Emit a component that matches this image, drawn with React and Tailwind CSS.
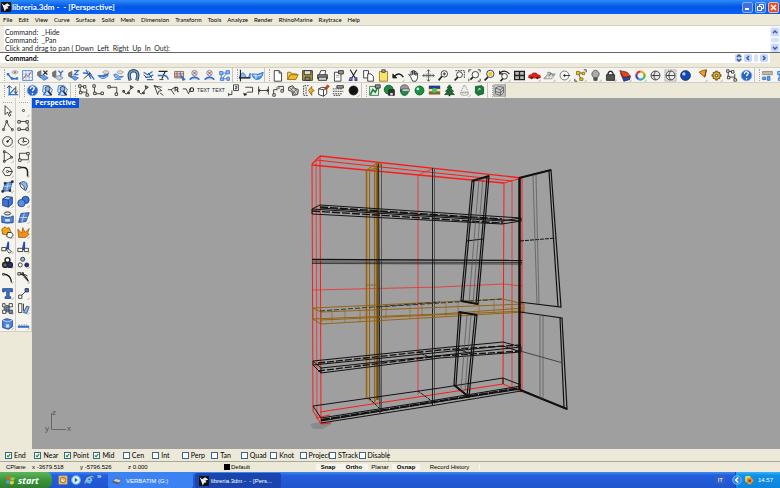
import { useState } from 'react';

const B = '#2f6fd0';
const D = '#222';

// Icon drawings, all on a 16x16 grid
const icons = {
    eyeLine: <><path d="M2 6l5 6 7 0" stroke={B} strokeWidth="1.6" /><path d="M7 4q4-4 8 0q-4 4-8 0z" fill="#ddd" stroke="#999" /><circle cx="11" cy="4" r="1.2" fill="#777" stroke="none" /><path d="M1 5h3v3H1zM6 10h3v3H6zM12 10h3v3h-3z" fill={B} stroke="none" /></>,
    gridMap: <><path d="M2 2h12v12H2z" fill="#fff" stroke={B} /><path d="M2 6h12M2 10h12M6 2v12M10 2v12" stroke="#79b5ec" /><path d="M3 12L6 7l3 2 4-6" stroke="#c33" /></>,
    cpX: <><path d="M2 4l4-2v9l-4-3z" fill="#777" stroke="#666" /><path d="M4 9l6 5 5-3-6-4z" fill="#6ba0ea" stroke={B} /><path d="M9 2l5 5M14 2L9 7" strokeWidth="1.5" /></>,
    cpY: <><path d="M2 4l4-2v9l-4-2z" fill="#777" stroke="#666" /><path d="M5 10l5 4 5-3-5-3z" fill="#bcd4f6" stroke="#888" /><path d="M9 2l3 3 3-3M12 5v4" stroke={B} strokeWidth="1.6" /></>,
    cpZ: <><path d="M2 5l4-2v8l-4-2z" fill="#777" stroke="#666" /><path d="M5 10l5 4 4-3-5-2z" fill="#6ba0ea" stroke={B} /><path d="M9 2h5L9 7h5" stroke={B} strokeWidth="1.5" /></>,
    cross: <><path d="M1 5q9-1 14 8M5 1l6 11" stroke={B} strokeWidth="1.6" /><path d="M2 12l8-7M8 3l4 4" /></>,
    srfEye: <><path d="M1 8q6 7 12 1l1-4-7 3z" fill={B} stroke={B} /><path d="M7 4q4-4 8 0q-4 4-8 0z" fill="#ddd" stroke="#999" /><path d="M4 10q5 2 8-1" stroke="#cfe0f8" /></>,
    srfPen: <><path d="M2 7q3 8 12 2-5 2-9-3z" fill="#8bb8ee" stroke={B} /><path d="M6 4q4-4 8 0q-4 4-8 0z" fill="#ddd" stroke="#999" /><path d="M3 13h8" stroke={B} /></>,
    magnet: <><path d="M4 14q-4-11 4-12 8 1 4 12" strokeWidth="4" stroke="#345" /><path d="M4 14q-4-11 4-12 8 1 4 12" strokeWidth="1.6" stroke="#6aa5ea" /></>,
    rays: <><path d="M2 4l5 3 6-4M4 10l5 0 5-3M6 13l8 0" stroke={B} strokeWidth="1.5" /><path d="M2 7l4 4M8 5l4 6" /></>,
    bars: <><path d="M2 3h11M10 3L6 12" strokeWidth="1.4" /><path d="M1 8h8q3 0 5 5" stroke={B} strokeWidth="1.7" /><path d="M3 13h5" /></>,
    cage: <><path d="M2 3h11v8H2zM2 6h11M2 9h11M5 3v8M9 3v8" stroke="#8a5a40" fill="#cfe0f8" /><path d="M10 8l5 5-3 1z" fill={B} stroke={B} /></>,
    pin: <><circle cx="8" cy="5" r="3.4" fill="#d9e6f6" stroke="#888" /><path d="M6 3l4 4M10 3L6 7" stroke="#a33" /><path d="M2 13q6-6 12 0" stroke={B} strokeWidth="2" fill="#bcd" /></>,
    net: <><path d="M2 3h4v4H2zM10 2h4v4h-4zM3 11h4v3H3zM11 10h3v4h-3z" fill="#8fc0f5" stroke={B} /><path d="M6 5h4M4 7v4M7 12h4M10 6l-4 5" stroke={B} /></>,
    graph: <><path d="M2 9q4-8 7-1t6-3v6H2z" fill="#8fb8ec" stroke={B} /><path d="M3 1v14M1 11h14" strokeWidth="1.4" /></>,
    hull: <><path d="M1 6q8 2 14-2-1 9-8 9-5-1-6-7z" fill="#4c93e8" stroke={B} /><path d="M3 8q5 2 10-1M6 7v5" stroke="#fff" /></>,
    newFile: <path d="M4 2h6l3 3v10H4zM10 2v3h3" fill="#fff" />,
    open: <><path d="M2 13V4h4l1 2h6v2" fill="#f7d768" stroke="#8a6508" /><path d="M2 13l3-6h10l-3 6z" fill="#f4b928" stroke="#8a6508" /></>,
    save: <><path d="M2 2h12v12H2z" fill="#b39b2c" /><path d="M4 2h8v5H4z" fill="#ddd" /><path d="M5 10h6v4H5z" fill="#888" /></>,
    print: <><path d="M4 7l2-5h6l-1 5" fill="#fff" /><path d="M2 7h12v5H2z" fill="#888" /><path d="M3 10h10v4H3z" fill="#ccc" /></>,
    note: <><path d="M3 4h8v11H3z" fill="#fff" /><path d="M8 2h6v4H8z" fill="#999" /><path d="M5 8h4M5 10h4" stroke="#999" /></>,
    cut: <><path d="M4 1l6 10M12 1L6 11" strokeWidth="1.4" /><path d="M4 11h2v3H3zM10 11h2v3h-2z" stroke="#3344a0" strokeWidth="1.6" /></>,
    copy: <><path d="M2 2h6v9H2z" fill="#fff" /><path d="M7 6h4l3 3v6H7z" fill="#fff" /></>,
    paste: <><path d="M3 3h10v12H3z" fill="#f8e36c" stroke="#8b7918" /><path d="M6 1h4v3H6z" fill="#bbb" /></>,
    undo: <><path d="M3 9q6-6 11 1" strokeWidth="1.8" /><path d="M1 6v5h5z" fill={D} /></>,
    hand: <path d="M4 9L2 7l1-1 2 2V3h2v4-5h2v5-4h2v5-3h2v6l-2 4H7z" fill="#fff" />,
    rotate: <><path d="M8 1v14M1 8h14M6 3l2-2 2 2M6 13l2 2 2-2M3 6L1 8l2 2M13 6l2 2-2 2" stroke="#444" /><ellipse cx="8" cy="8" rx="4" ry="2" stroke="#888" /></>,
    zoom: <><circle cx="9" cy="6" r="4" fill="#f7f7f7" /><path d="M6 9l-4 5" strokeWidth="2" /><path d="M7 6h4M9 4v4" /></>,
    zoomWin: <><path d="M3 2h11v10" strokeDasharray="2 1" /><circle cx="8" cy="7" r="3.6" fill="#f7f7f7" /><path d="M6 10l-4 4" strokeWidth="2" /></>,
    zoomAll: <><path d="M1 4V1h3M12 1h3v3M15 12v3h-3M1 12v3" /><circle cx="9" cy="7" r="4" fill="#f7f7f7" /><path d="M6 10l-3 3" strokeWidth="2" /></>,
    zoomSel: <><circle cx="9" cy="6" r="4.5" fill="#eee" /><circle cx="9" cy="6" r="2.6" fill="#f3c62c" stroke="none" /><path d="M6 10l-4 4" strokeWidth="2" /></>,
    zoomBack: <><circle cx="8" cy="9" r="3.5" fill="#f7f7f7" /><path d="M6 12l-3 3" strokeWidth="2" /><path d="M2 5q6-5 12 1M2 2v4h4" strokeWidth="1.4" /></>,
    four: <><path d="M2 3h12v10H2z" fill="#bbb" strokeWidth="1.6" /><path d="M2 8h12M8 3v10" strokeWidth="1.6" /></>,
    car: <><path d="M1 8l3-1 2-2h4l2 2 3 1v3H1z" fill="#e02020" stroke="#c01010" /><circle cx="4.5" cy="11" r="1" fill="#222" /><circle cx="11.5" cy="11" r="1" fill="#222" /></>,
    plane: <><path d="M1 12l5-6h9l-4 6z" fill="#bbb" stroke="#888" /><path d="M4 10h9M7 7l-2 5M11 6l-2 6" stroke="#eee" /><path d="M5 5q4-3 7 3" stroke="#2a8a4a" /><path d="M7 9l3-4" stroke="#c33" /></>,
    target: <><circle cx="8" cy="8" r="5.5" stroke="#666" /><circle cx="8" cy="8" r="1" fill={D} /><path d="M8 8h7" /></>,
    points: <><path d="M12 1h3v3M1 12v3h3M7 5h3M8 11L6 7" /><path d="M3 3h4v4H3zM10 4h3v3h-3zM7 11h4v3H7z" fill="#f2c61c" stroke="#86680a" /></>,
    bulb: <><path d="M6 11Q2 7 4 4q4-5 8 0 2 3-2 7z" fill="#aaa" stroke="#555" /><path d="M6 11h4v3H6z" fill="#555" stroke="#444" /></>,
    lock: <><path d="M5 8V5q3-5 6 0v3" strokeWidth="1.6" /><path d="M3 7h10v7H3z" fill="#555" /></>,
    layers: <><path d="M2 5l3 5 9-1-1 4-7 2z" fill="#284b9c" stroke="#152c66" /><path d="M1 2l9 2 4 5-9 1z" fill="#e8431c" stroke="#801c08" /></>,
    wheel: <><path d="M8 3a5 5 0 0 1 4.300 2.500" stroke="#f5a11a" strokeWidth="2.600" /><path d="M12.300 5.500a5 5 0 0 1-1 6.200" stroke="#67b72c" strokeWidth="2.600" /><path d="M11.300 11.700a5 5 0 0 1-5.800.6" stroke="#29a9d8" strokeWidth="2.600" /><path d="M5.500 12.300a5 5 0 0 1-2-6.400" stroke="#5c37c6" strokeWidth="2.600" /><path d="M3.500 5.900A5 5 0 0 1 8 3" stroke="#e22d2d" strokeWidth="2.600" /></>,
    globe: <><circle cx="8" cy="8" r="5.5" fill="#e5e5e5" /><path d="M3 8h10" /><path d="M8 3q-4 5 0 10" /></>,
    globeSel: <><path d="M1 1h14v14H1z" fill="#ddd" stroke="#888" strokeDasharray="1 1" /><circle cx="8" cy="8" r="5.5" fill="#eee" /><path d="M3 8h10M8 3q-4 5 0 10" /></>,
    blueBall: <><circle cx="8" cy="8" r="6" fill="#1547b4" stroke="#0b2257" /><circle cx="6" cy="6" r="2" fill="#b9d4ff" stroke="none" /></>,
    cone: <><path d="M5 4q4-3 9-3l-2 9z" fill="#f29b2c" stroke="#90500a" /><path d="M14 1l-2 9" stroke="#333" /></>,
    gear: <><path d="M8 2v12M2 8h12M4 4l8 8M12 4l-8 8" stroke="#6b4f0c" strokeWidth="3" /><circle cx="8" cy="8" r="4.5" fill="#e2b335" stroke="#7c5c10" /><circle cx="8" cy="8" r="1.5" fill="#fff" /></>,
    dimBox: <><path d="M4 3v7h8M4 3h4M12 6v8" /><path d="M2 1h3v3H2zM8 2h3v3H8zM3 9h3v3H3zM11 12h3v3h-3z" fill="#fff" /></>,
    help: <><circle cx="8" cy="8" r="6.5" fill="#2764c6" stroke="#7fa6e8" /><path d="M5.500 6q0-3 3-2.600 3 1 1 3.200-1.500 1-1.500 2.400" stroke="#fff" strokeWidth="1.600" /><circle cx="8" cy="12" r="1" fill="#fff" stroke="none" /></>,
    panel: <><path d="M2 3h12v4H2z" fill="#c4b89a" stroke="#888" /><path d="M2 10h4v3H2zM8 9h3v5H8z" fill="#5c9fe8" stroke={B} /></>,
    axes: <><path d="M4 2v11h11M3 14l8-9" stroke={B} strokeWidth="1.600" /><path d="M1 5l3-3 3 3M12 3v8M10 9l2 3 2-3" /></>,
    findMan: <><path d="M3 2h7l4 5-3 7H6L2 9z" fill="#d7e6fa" stroke={B} /><circle cx="8" cy="6" r="3" fill="#8fb8ec" stroke="#234" /><path d="M9 9l4 5" strokeWidth="2" /><path d="M3 14l3-5" stroke={B} strokeWidth="2" /></>,
    dimL: <><path d="M3 3v9h9" /><path d="M1 1h3v3H1zM2 10h3v3H2zM11 10h3v3h-3z" fill="#fff" /></>,
    dimR: <><path d="M2 4h10v8" /><path d="M1 2h3v3H1zM10 11h3v3h-3z" fill="#fff" /></>,
    curvePt: <><path d="M2 9q3 6 6 1l4-6" /><path d="M1 8h2v2H1zM7 10h2v2H7zM10 2l4 2-3 2z" fill="#888" /></>,
    arrowPts: <><path d="M3 2l4 11 1-4 4-1z" fill="#fff" /><path d="M2 2l10 2M10 11l4 3" /></>,
    leaderA: <><path d="M1 7h4l4 6M5 7l5-3" /><path d="M10 9V4h2q3 2 0 3l2 3" strokeWidth="1.300" /></>,
    leaderB: <><path d="M1 6h4l3 6 3-7" /><circle cx="12" cy="7" r="2.300" strokeWidth="1.300" /></>,
    dimTwo: <><path d="M2 13h4V8M2 11v4" /><path d="M8 1h6v7H8z" fill="#fff" /><path d="M10 3h2v2h-2v1h2" /></>,
    leader: <><path d="M3 13l4-3h6V4H4" /><path d="M2 11l1 3 3-1" fill={D} /></>,
    dimH: <path d="M2 3v10M14 3v10M2 8h12M4 6L2 8l2 2M12 6l2 2-2 2" />,
    dimV: <><path d="M2 13V7h5M7 3h7v5M5 5l5 0" /><path d="M1 12h3v3H1zM11 7h3v3h-3z" fill="#fff" /></>,
    hatch: <><path d="M2 4l5-2 2 3 5 2-1 6-6 1-1-5-4-1z" fill="#ddd" /><path d="M3 4l9 9M6 3l8 8M6 9l4 5M12 6l-5 6M8 4L4 8" stroke="#555" /></>,
    explodeB: <><path d="M8 2H2v12h6M5 4v8" strokeDasharray="2 1" /><path d="M8 8l4-5v3l3 2-3 2v4z" fill="#f2b028" stroke="#8a5c08" /></>,
    boxPen: <><path d="M2 6l4-2 6 1v7l-4 3-6-2zM2 6l6 1 4-2M8 7v8" fill="#fff" /><path d="M10 5l3-4 2 2-4 4z" fill="#e8431c" stroke="#a02a0a" /></>,
    list: <><path d="M1 6h11M1 9h13M1 12h11M2 14h8" strokeDasharray="2 1" /><path d="M6 2h8v3H6z" fill="#aaa" /></>,
    ball: <circle cx="8" cy="8" r="5.5" fill="#111" />,
    renderBox: <><path d="M2 3h11v11H2z" fill="#e6f3ea" stroke="#2c6b40" /><path d="M3 13l3-6 3 3 3-6" stroke="#168238" strokeWidth="2" /><path d="M9 1h6v4H9z" fill="#999" /></>,
    renderSave: <><circle cx="7" cy="7" r="5.5" fill="#159044" stroke="#0c5427" /><path d="M7 7h7v7H7z" fill="#333" /><path d="M9 11h3v3H9z" fill="#ddd" stroke="none" /></>,
    renderWin: <><circle cx="8" cy="6" r="5" fill="#999" stroke="#555" /><path d="M3 7h10q0 7-5 7t-5-7z" fill="#159044" stroke="#0c5427" /><path d="M5 6h9v3H5z" fill="#ddd" stroke="#555" /></>,
    greenBall: <><circle cx="8" cy="8" r="5.5" fill="#149443" stroke="#0c5427" /><circle cx="6" cy="6" r="1.600" fill="#d5ffe2" stroke="none" /></>,
    sky: <><path d="M1 2h14v5H1z" fill="#233a91" stroke="none" /><path d="M1 6h14v3H1z" fill="#f5e37a" stroke="none" /><path d="M1 9h14v4H1z" fill="#8a5f30" stroke="none" /><circle cx="8" cy="8" r="3" fill="#4cc25e" stroke="none" /></>,
    tree: <><path d="M8 1l3 4H9l4 4h-3l4 4H2l4-4H3l4-4H5z" fill="#1c6b33" stroke="#134a23" /><path d="M8 13v2" strokeWidth="2" /></>,
    spot: <><path d="M7 2h2l4 9H3z" fill="#eee" stroke="#888" strokeDasharray="2 1" /><ellipse cx="8" cy="12" rx="5" ry="2" stroke="#999" /></>,
    greenDoc: <><path d="M3 3l8-1 2 2v8l-7 2-3-3z" fill="#1c7a3b" stroke="#0c5427" /><path d="M6 8l3-3M7 5l2 2" stroke="#fff" /></>,
    meshCube: <><path d="M1 1h14v14H1z" fill="#ccc" stroke="#888" /><path d="M3 5l4-2 6 1v7l-4 3-6-2zM3 5l6 2 4-3M9 7v7M3 9l6 2 4-4" stroke="#555" /></>,
    arrow: <path d="M5 2v11l3-3 2 5 2-1-2-4h3z" fill="#fff" />,
    dot: <circle cx="8" cy="8" r="1.300" fill="#fff" />,
    poly: <><path d="M3 13L7 3l3 6 4 4" /><path d="M2 12h2v2H2zM6 2h2v2H6zM13 12h2v2h-2z" fill="#fff" /></>,
    ctrl: <><path d="M3 3h10M3 13h9q4-6 0-8" /><path d="M1 2h3v3H1zM11 2h3v3h-3zM1 11h3v3H1zM11 11h3v3h-3z" fill="#fff" /></>,
    circle: <><circle cx="8" cy="8" r="6" /><circle cx="8" cy="8" r="1" fill={D} /><path d="M8 8l4-4" /></>,
    ellipse: <><ellipse cx="8" cy="8" rx="6.500" ry="4.500" /><path d="M8 4v4h4" /><circle cx="8" cy="8" r="1" fill="#fff" /></>,
    arc: <><path d="M4 2v12l9-5Q11 4 4 2z" /><path d="M3 1h2v2H3zM3 13h2v2H3zM12 8h2v2h-2z" fill="#fff" /></>,
    rect: <><path d="M3 4h11v8H3z" /><path d="M2 11h3v3H2zM12 3h3v3h-3z" fill="#fff" /></>,
    hexagon: <><path d="M5 3h6l3 5-3 5H5L2 8z" /><circle cx="8" cy="8" r="1.300" fill="#fff" /><path d="M9 8h5" /></>,
    fillet: <><path d="M3 3h5q5 0 5 6v5" strokeWidth="1.800" /><path d="M1 2h3v2H1z" fill="#fff" /></>,
    surf: <><path d="M5 4l9-2-3 11-9 1z" fill="#5b8fe4" stroke="#26457e" /><path d="M9 3L7 13M4 8l9-1" stroke="#cfe0f8" /><path d="M4 3h2v2H4zM13 1h2v2h-2zM10 12h2v2h-2zM1 13h2v2H1z" fill="#345" /></>,
    revolve: <><path d="M3 4q5-4 9 0 2 4-1 9l-2-1q1-6-6-8z" fill="#8fb8ec" stroke="#26457e" /><path d="M3 4q1 6 6 8" /></>,
    cube: <><path d="M2 5l5-3 7 1v8l-5 4-7-2z" fill="#3b74d4" stroke="#1c3d7c" /><path d="M2 5l7 1 5-3-7-1z" fill="#9cc0f6" stroke="#1c3d7c" /><path d="M9 6v9" stroke="#1c3d7c" /></>,
    balls: <><circle cx="10.5" cy="6" r="4.5" fill="#3b74d4" stroke="#1c3d7c" /><circle cx="5.5" cy="10" r="4.5" fill="#5b8fe4" stroke="#1c3d7c" /></>,
    tube: <><ellipse cx="8" cy="3" rx="4" ry="2" fill="#ddd" /><path d="M1 6q7 4 14 0v8q-7 2-14 0z" fill="#4f84d8" stroke="#1c3d7c" /><path d="M5 10h6v3H5z" fill="#cfe0f8" stroke="none" /></>,
    mesh: <><path d="M5 3l10-1-4 11-9 1z" fill="#4f84d8" stroke="#26457e" /><path d="M9 3L6 14M4 8h9" stroke="#cfe0f8" /></>,
    join: <><path d="M1 4l4-3 2 2 3-1 2 5-4 4-6-1z" fill="#f2a51c" stroke="#8a5c08" /><path d="M8 8h5l2 3-3 4-5-2z" fill="#fff" /></>,
    explode: <path d="M2 14L1 4l5 5 1-7 3 6 5-5-2 6 2 1-4 4z" fill="#f2921c" stroke="#a35a08" />,
    trim: <><path d="M9 1v9H7z" fill="#2450b0" stroke="#2450b0" strokeWidth="2" /><path d="M1 8h5v4H1zM8 9l5 4-3 2-3-4z" fill="#fff" /></>,
    split: <><path d="M9 1v9H7z" fill="#2450b0" stroke="#2450b0" strokeWidth="2" /><path d="M1 9h6v4H1zM9 9h5v4H9z" fill="#fff" /></>,
    group: <><circle cx="8" cy="5" r="3" fill="#fff" strokeWidth="1.800" /><circle cx="5" cy="11" r="3" fill="#666" strokeWidth="1.800" /><circle cx="11" cy="11" r="3" fill="#1c2fa0" strokeWidth="1.800" /></>,
    ungroup: <><circle cx="7" cy="4" r="2.500" fill="#8fb8ec" /><circle cx="4" cy="11" r="2.500" fill="#fff" /><circle cx="12" cy="11" r="2.500" fill="#1c2fa0" /></>,
    arcPts: <><path d="M3 4q9 0 10 10" strokeWidth="1.600" /><path d="M2 3h2v2H2z" fill="#fff" /></>,
    arcEdit: <><path d="M2 4q8-1 12 9" strokeWidth="1.600" /><path d="M4 2l9 4M6 2h2v3M8 7l5 5" /><path d="M1 2h3v3H1z" fill="#fff" /></>,
    type: <path d="M2 2h12v4h-2V5H10v7h2v2H5v-2h2V5H4v1H2z" fill="#3b74d4" stroke="#1c3d7c" />,
    linkSq: <><path d="M5 11l6-6" /><path d="M2 10h4v4H2z" fill="#fff" /><path d="M10 2h4v4h-4z" fill="#3b74d4" /></>,
    blocks: <><path d="M6 4l4 1M6 12h4M4 6v4" /><path d="M2 2h3v4H2zM10 2h4v4h-4zM2 10h4v4H2z" fill="#fff" /><path d="M6 6h4v4H6zM10 10h4v4h-4z" fill="#6b9be8" /></>,
    scale: <><path d="M2 2h4v11H2z" fill="#fff" /><path d="M8 13l4-8 3 1-3 8z" fill="#8fb8ec" stroke="#26457e" /><path d="M8 2v9" /></>,
    box: <><path d="M2 4l5-2 7 2v8l-5 3-7-2z" fill="#4f84d8" stroke="#1c3d7c" /><path d="M2 4l6 2 6-2" stroke="#cfe0f8" /><path d="M6 9h4v4H6z" fill="#cfe0f8" stroke="none" /></>,
    ruler: <><path d="M1 12h14" stroke={B} strokeWidth="2.600" /><path d="M3 9v2M6 9v2M9 9v2M12 9v2" stroke="#888" /></>,
};

// Tools that open a flyout get a small mark in their corner
const flyouts = ['undo', 'zoomBack', 'car', 'plane', 'target', 'points', 'bulb', 'lock', 'layers', 'wheel', 'cone', 'gear', 'dimBox', 'ball', 'spot'];

const topA = ['eyeLine', 'gridMap', 'cpX', 'cpY', 'cpZ', 'cross', 'srfEye', 'srfPen', 'magnet', 'rays', 'bars', 'cage', 'pin', 'pin', 'net'];
const topB = ['graph', 'hull'];
const topC = ['newFile', 'open', 'save', 'print', 'note', 'cut', 'copy', 'paste', 'undo', 'hand', 'rotate', 'zoom', 'zoomWin', 'zoomAll', 'zoomSel', 'zoomBack', 'four', 'car', 'plane', 'target', 'points', 'bulb', 'lock', 'layers', 'wheel', 'globe', 'globeSel', 'blueBall', 'cone', 'gear', 'dimBox', 'help'];
const helpBar = ['help', 'findMan', 'findMan'];
const dimBar = ['dimBox', 'dimL', 'dimR', 'curvePt', 'curvePt', 'arrowPts', 'leaderA', 'leaderB', 'TEXT', 'TEXT', 'dimTwo', 'leader', 'dimH', 'dimV', 'hatch', 'explodeB', 'boxPen', 'list', 'ball'];
const renderBar = ['renderBox', 'renderSave', 'renderWin', 'greenBall', 'sky', 'tree', 'spot', 'greenDoc'];
const sideA = ['arrow', 'poly', 'circle', 'arc', 'hexagon', 'surf', 'cube', 'tube', 'join', 'trim', 'group', 'arcPts', 'type', 'blocks', 'box'];
const sideB = ['dot', 'ctrl', 'ellipse', 'rect', 'fillet', 'revolve', 'balls', 'mesh', 'explode', 'split', 'ungroup', 'arcEdit', 'linkSq', 'scale', 'ruler'];

const menus = ['File', 'Edit', 'View', 'Curve', 'Surface', 'Solid', 'Mesh', 'Dimension', 'Transform', 'Tools', 'Analyze', 'Render', 'RhinoMarine', 'Raytrace', 'Help'];

const snaps = ['End', 'Near', 'Point', 'Mid', 'Cen', 'Int', 'Perp', 'Tan', 'Quad', 'Knot', 'Project', 'STrack', 'Disable'];

function ToolButton({ name, flyout }) {
    return (
        <button aria-label={name} className="flex h-full min-w-0 flex-1 items-center justify-center">
            {name === 'TEXT' ? (
                <span className="text-[5px] leading-none text-[#222]">TEXT</span>
            ) : (
                <svg viewBox="0 0 16 16" className="size-[13px] shrink-0" fill="none" stroke="#222">
                    {icons[name]}
                    {(flyout || flyouts.includes(name)) && <path d="M13 16l3-3" stroke="#999" />}
                </svg>
            )}
        </button>
    );
}

function Toolbar({ names, className }) {
    return (
        <div className={'flex h-full shrink-0 items-center border-r border-[#c9c6b8] bg-[#f5f4ef] pl-1 ' + className}>
            <span className="h-3 border-l border-dotted border-[#aaa79a]"></span>
            {names.map((name, i) => <ToolButton key={i} name={name} />)}
        </div>
    );
}

function SideBar({ names }) {
    return (
        <div className="flex h-[234px] w-4 flex-col items-stretch border-r border-b border-[#d3d0c3] bg-[#f5f4ef] pt-1">
            <span className="mx-[3px] border-t border-dotted border-[#aaa79a]"></span>
            {names.map((name) => (
                <div key={name} className="flex min-h-0 flex-1"><ToolButton name={name} flyout={name !== 'arrow'} /></div>
            ))}
        </div>
    );
}

function RhinoMark() {
    return (
        <svg viewBox="0 0 16 16" className="size-2.5 shrink-0">
            <path d="M0 0h16v16H0z" fill="#111" />
            <path d="M1 2l4 3 5-3 5 4-5 1 2 3-4 1-2 4-2-6z" fill="#eee" />
        </svg>
    );
}

function TitleBar() {
    return (
        <header className="flex h-3.5 shrink-0 items-center bg-linear-to-b from-[#2f8bf8] via-[#0054e3] to-[#0761f8] px-px text-white">
            <RhinoMark />
            <h1 className="ml-px flex-1 font-['Lato',sans-serif] text-[8px] leading-none font-bold whitespace-pre">libreria.3dm -  - [Perspective]</h1>
            <div className="flex gap-0.5">
                <button aria-label="Minimize" className="flex h-[11px] w-[11px] items-end rounded-xs border border-[#8fb0f5] bg-[#3b6fe8] p-0.5">
                    <span className="h-0.5 w-1 bg-white"></span>
                </button>
                <button aria-label="Restore" className="h-[11px] w-[11px] rounded-xs border border-[#8fb0f5] bg-[#3b6fe8]">
                    <svg viewBox="0 0 9 9" fill="none" stroke="#fff"><path d="M3.500 3V1.500h4v4H6M1.500 3.500h4v4h-4z" /></svg>
                </button>
                <button aria-label="Close" className="h-[11px] w-[11px] rounded-xs border border-[#f0b8a4] bg-[#e2532c]">
                    <svg viewBox="0 0 9 9" fill="none" stroke="#fff" strokeWidth="1.500"><path d="M2 2l5 5M7 2L2 7" /></svg>
                </button>
            </div>
        </header>
    );
}

function Chevron({ label, d, className }) {
    return (
        <button aria-label={label} className={'h-2 rounded-xs bg-[#c6d5fb] ' + className}>
            <svg viewBox="0 0 8 8" className="mx-auto size-2" fill="none" stroke="#3d5a94" strokeWidth="1.500"><path d={d} /></svg>
        </button>
    );
}

function CommandArea() {
    const [command, setCommand] = useState('');
    return (
        <section className="flex shrink-0 flex-col pb-1 font-['Lato',sans-serif]">
            <div className="flex bg-white">
                <div className="flex flex-1 flex-col border-l-4 border-[#f0eee4] pt-0.5 pl-px text-[7px] leading-2 whitespace-pre text-[#222]">
                    <p>Command:  _Hide</p>
                    <p>Command:  _Pan</p>
                    <p>Click and drag to pan ( Down  Left  Right  Up  In  Out):</p>
                </div>
                <div className="flex w-2.5 flex-col justify-between bg-[#f3f5fd] px-px pt-0.5">
                    <Chevron label="Scroll up" d="M2 5l2-2 2 2" className="w-2" />
                    <span className="h-1 w-2 rounded-xs bg-[#d5e0fc]"></span>
                    <Chevron label="Scroll down" d="M2 3l2 2 2-2" className="w-2" />
                </div>
            </div>
            <div className="flex h-[11px] items-center border-t border-[#666] bg-white pl-[5px]">
                <label htmlFor="command" className="text-[7px] leading-none font-bold">Command:</label>
                <input id="command" value={command} onChange={(e) => setCommand(e.target.value)} className="ml-1 h-2 min-w-0 flex-1 text-[7px] outline-none" />
                <div className="flex items-center gap-0.5">
                    <Chevron label="History" d="M2 3l2-2 2 2M2 5l2 2 2-2" className="w-[7px]" />
                    <Chevron label="Scroll left" d="M5 2L3 4l2 2" className="w-2" />
                    <span className="h-2 w-1 rounded-xs bg-[#d5e0fc]"></span>
                    <Chevron label="Scroll right" d="M3 2l2 2-2 2" className="w-2" />
                    <span className="h-2.5 w-2.5 bg-[#ece9d8]"></span>
                </div>
            </div>
        </section>
    );
}

function Model() {
    return (
        <svg viewBox="32 98 748 351" className="h-full w-full" fill="none" strokeWidth="1">
            <path d="M310 424l10-2 12 2-10 5-9 0z" fill="#8b8b8b" />
            {/* back and side frame */}
            <g stroke="#ff1a1a">
                <path d="M320 156L522 178M312 165L504 183M312 164L320 156" strokeWidth="1.300" />
                <path d="M522 178L504 183M316 160L512 181M312 164L313 411L321 424M320 156L321 424L331 423" />
                <path d="M504 183L503 384L522 392M522 178L522 392M320 412L503 384M316 418L330 415" />
                <path d="M316 160L317 417M512 181L512 388M418 175V395M418 175L432 169M312 290L440 287L503 284L522 286" strokeWidth="0.700" />
            </g>
            {/* vertical dividers */}
            <path d="M378.500 163L380 414M432.500 168V405" stroke="#222" />
            <path d="M381.500 164V412M434.500 168V404" stroke="#555" />
            <g stroke="#96650f">
                <path d="M366.500 170L377 163L381 164L379 168L366.500 170V398L374 403L377 398V163M369.500 169V400M374.500 166V403M367 285h10" />
                <path d="M366.500 170V398M376.500 164V400" strokeWidth="1.600" />
                <path d="M313 308L440 302L503 299L524 304V312L440 317L321 324L313 319zM313 308L321 312L524 304M321 312V324M313 319L440 314L524 308M321 320L524 311" />
                <path d="M332 309V322M345 309V322M360 308V321M386 306V319M410 306V318M422 304V317M446 303V316M458 303V315M479 302V314M494 301V313M512 300V312" strokeWidth="0.600" />
            </g>
            <path d="M378 165V400" stroke="#3a2a0a" />
            <path d="M320 311L440 302M378 307L503 299" stroke="#333" strokeDasharray="5 2" />
            {/* shelves */}
            <g stroke="#111">
                <path d="M312 209L320 205L521 218V221L502 224L312 214zM312 209L502 221L521 218M320 208L521 221" />
                <path d="M312 211L502 223M320 207L502 219M502 221V224" strokeWidth="1.400" strokeDasharray="8 2" />
                <path d="M312 259.500L522 260.500" strokeWidth="1.300" />
                <path d="M312 262L522 262.500M312 263.500L522 264" strokeWidth="0.700" />
                <path d="M313 361L440 348L503 342L521 347V352L440 358L321 373L313 365zM313 361L321 368L521 347M321 368V373M313 365L503 346L521 352" />
                <path d="M318 363L440 350L521 345M318 371L440 356L521 351" strokeWidth="1.300" strokeDasharray="7 2" />
                <path d="M313 406L440 388L503 378L521 385M503 378V384M313 406L321 418" />
                <path d="M418 391L433 402M369 398L380 409M418 352L433 359" strokeDasharray="3 1" />
                <path d="M321 418L430 401L521 386M321 421L430 403L521 389M321 423L430 406L521 391" />
                <path d="M321 420L440 401L520 388" strokeWidth="2" strokeDasharray="9 1" />
            </g>
            {/* doors */}
            <g stroke="#111">
                <path d="M472 181L489 176L478 304L461 301zM474 181L463 301M487 177L476 304" strokeWidth="1.200" />
                <path d="M472 181L489 176M461 301L478 304" strokeWidth="2" />
                <path d="M466 241L483 239M456 348L473 355" />
                <path d="M459 312L477 315L469 397L454 385zM461 312L456 385M475 315L467 396" strokeWidth="1.200" />
                <path d="M459 312L477 315M454 385L469 397" strokeWidth="2" />
                <path d="M519 178L551 170L561 307L519 302M549 171L558 306" strokeWidth="1.200" />
                <path d="M519 178L551 170" strokeWidth="2" />
                <path d="M520 312L562 318L567 409L519 389M560 318L564 407" strokeWidth="1.200" />
                <path d="M520 390L567 409" strokeWidth="2" />
                <path d="M520 241L556 238" strokeDasharray="4 1" />
                <path d="M520 351L563 363" stroke="#444" />
                <path d="M519.500 178V390" strokeWidth="2.500" />
            </g>
            <path d="M479 179L469 302M483 178L473 303M533 176L537 304M536 175L539 304M540 316V398M543 316V399M467 315L461 389M471 315L465 391" stroke="#555" strokeWidth="0.700" />
            {/* world axes */}
            <path d="M51.500 413V429.500H66" stroke="#666" />
            <g fill="#555" fontSize="8" fontFamily="Liberation Sans, sans-serif">
                <text x="52" y="415">z</text>
                <text x="45" y="431">y</text>
                <text x="67" y="431">x</text>
            </g>
        </svg>
    );
}

function OsnapBar() {
    const [active, setActive] = useState(['End', 'Near', 'Point', 'Mid']);

    function toggle(name) {
        setActive((prev) => prev.includes(name) ? prev.filter((n) => n !== name) : [...prev, name]);
    }

    return (
        <div className="flex h-[13px] shrink-0 border-b border-[#aaa89c]">
            <div className="grid w-[389px] grid-cols-13 items-center border-r border-[#c5c2b2] pl-[5px]">
                {snaps.map((name) => (
                    <label key={name} className="flex items-center gap-0.5 font-['Lato',sans-serif] text-[7px] leading-none">
                        <input
                            type="checkbox"
                            checked={active.includes(name)}
                            onChange={() => toggle(name)}
                            className="peer sr-only"
                        />
                        <span className="size-[7px] shrink-0 border border-[#3c6490] bg-white text-white peer-checked:text-[#1fa01f]">
                            <svg viewBox="0 0 6 6" fill="none" stroke="currentColor" strokeWidth="1.500"><path d="M1 3l1.500 1.500L5 1" /></svg>
                        </span>
                        {name}
                    </label>
                ))}
            </div>
        </div>
    );
}

function StatusBar() {
    return (
        <div className="flex h-[10px] shrink-0 items-center text-[6px] leading-none">
            <span className="w-8 pl-1.5">CPlane</span>
            <span className="w-12">x -3679.518</span>
            <span className="w-12">y -5796.526</span>
            <span className="w-24">z 0.000</span>
            <button className="flex w-[92px] items-center"><span className="mr-px size-1.5 bg-black"></span>Default</button>
            <button className="w-6 bg-[#f5f4ef] font-bold">Snap</button>
            <button className="w-7 bg-[#f5f4ef] font-bold">Ortho</button>
            <button className="w-6">Planar</button>
            <button className="w-7 bg-[#f5f4ef] font-bold">Osnap</button>
            <button className="w-[60px] border-r border-[#f8f7f0]">Record History</button>
        </div>
    );
}

function TaskBar() {
    return (
        <footer className="flex h-4 shrink-0 items-stretch bg-linear-to-b from-[#3f8cf3] via-[#245edb] via-20% to-[#1f55cf] text-[7px] leading-none text-white">
            <button className="flex w-[52px] items-center gap-0.5 rounded-r-md bg-linear-to-b from-[#5eb55c] via-[#3a953a] to-[#2f7d2f] pl-1.5">
                <svg viewBox="0 0 16 16" className="size-2.5">
                    <path d="M2 3q3-2 5 0L6 8Q4 6 1 8z" fill="#f0562a" />
                    <path d="M8 3q3 2 6 0l-1 5q-3 2-6 0z" fill="#8fd146" />
                    <path d="M1 9q3-2 5 0l-1 5q-2-2-5 0z" fill="#4f9cf5" />
                    <path d="M7 9q3 2 6 0l-1 5q-3 2-6 0z" fill="#f9cd2e" />
                </svg>
                <span className="font-['Open_Sans',sans-serif] text-[9px] leading-none font-bold italic">start</span>
            </button>
            <nav className="flex w-14 items-center gap-[3px] pl-1.5">
                <button aria-label="Outlook">
                    <svg viewBox="0 0 16 16" className="size-2.5"><path d="M1 1h14v14H1z" fill="#e5b86a" /><circle cx="8" cy="8" r="4" fill="#fff" stroke="#c07a1c" strokeWidth="2" /><path d="M8 5v3h2" fill="none" stroke="#a55" /></svg>
                </button>
                <button aria-label="Media Player">
                    <svg viewBox="0 0 16 16" className="size-2.5"><circle cx="8" cy="8" r="7" fill="#e9f3ff" stroke="#58a6f0" strokeWidth="2" /><path d="M6 4l5 4-5 4z" fill="#1c66d0" /></svg>
                </button>
                <button aria-label="Internet Explorer">
                    <svg viewBox="0 0 16 16" className="size-2.5" fill="none"><path d="M4 9h8q0-5-4-5-4 1-4 5 1 4 7 3" stroke="#6cc0fa" strokeWidth="2.500" /><path d="M2 14Q0 10 8 4q6-4 7 0" stroke="#f5c542" strokeWidth="1.400" /></svg>
                </button>
                <span className="self-start pt-px text-[8px]">»</span>
            </nav>
            <button className="mt-px mr-0.5 flex w-[85px] items-center gap-1 rounded-xs bg-[#3d82f2] pl-1 text-[6px]">
                <svg viewBox="0 0 16 16" className="size-2.5"><path d="M1 8l5-4 9 2-4 5z" fill="#ccc" stroke="#555" /><path d="M1 8l10 3v2L1 10z" fill="#555" /></svg>
                VERBATIM (G:)
            </button>
            <button className="mt-px flex w-[86px] items-center gap-0.5 rounded-xs bg-[#1a45ac] pl-1 text-[6px] whitespace-pre">
                <RhinoMark />
                libreria.3dm -  - [Pers...
            </button>
            <div className="ml-auto flex items-center">
                <span className="mr-2.5 bg-[#3060c0] px-0.5 py-px text-[6px]">IT</span>
                <div className="flex h-full items-center gap-0.5 border-l border-[#0c4fb8] bg-linear-to-b from-[#35b5f5] via-[#1290e6] via-20% to-[#0d84dd] pr-[7px]">
                    <button aria-label="Show hidden icons" className="-ml-1">
                        <svg viewBox="0 0 16 16" className="size-2.5"><circle cx="8" cy="8" r="7" fill="#2f88e8" stroke="#9fd2fa" /><path d="M10 4L6 8l4 4" fill="none" stroke="#fff" strokeWidth="2.500" /></svg>
                    </button>
                    <svg viewBox="0 0 16 16" className="size-2.5"><path d="M2 2l7-1 6 8-6 6-7-5z" fill="#d7e86a" /><circle cx="9" cy="9" r="5" fill="#f08a1c" /><circle cx="9" cy="9" r="2" fill="#8a3a0a" /></svg>
                    <time className="pl-0.5 text-[6px]">14.57</time>
                </div>
            </div>
        </footer>
    );
}

export default function App() {
    return (
        <div className="flex h-screen flex-col overflow-hidden bg-[#ece9d8] font-['Liberation_Sans',Arial,sans-serif] text-black">
            <TitleBar />
            <nav className="flex h-3 shrink-0 items-center gap-1.5 border-b border-[#d5d2c4] pl-[3px] font-['Lato',sans-serif] text-[6px] leading-none">
                {menus.map((menu) => <button key={menu}>{menu}</button>)}
            </nav>
            <CommandArea />
            <div className="flex h-4 shrink-0 overflow-hidden border-t border-b border-[#d3d0c3] bg-[#f5f4ef]">
                <Toolbar names={topA} className="w-[233px]" />
                <Toolbar names={topB} className="w-8" />
                <Toolbar names={topC} className="w-[490px]" />
                <Toolbar names={['panel', 'net']} className="w-9" />
            </div>
            <div className="flex h-[15px] shrink-0">
                <Toolbar names={['axes']} className="w-5" />
                <Toolbar names={helpBar} className="w-[51px]" />
                <Toolbar names={dimBar} className="w-[291px]" />
                <Toolbar names={renderBar} className="w-[126px]" />
                <Toolbar names={['meshCube']} className="w-[18px]" />
            </div>
            <div className="flex min-h-0 flex-1">
                <aside className="flex w-8 shrink-0">
                    <SideBar names={sideA} />
                    <SideBar names={sideB} />
                </aside>
                <main className="relative min-w-0 flex-1 bg-[#9f9f9f]">
                    <h2 className="absolute top-0 left-0 bg-[#0a52dc] px-[3px] py-px font-['Open_Sans',sans-serif] text-[7px] leading-2 font-bold text-white">Perspective</h2>
                    <Model />
                </main>
            </div>
            <OsnapBar />
            <StatusBar />
            <TaskBar />
        </div>
    );
}
